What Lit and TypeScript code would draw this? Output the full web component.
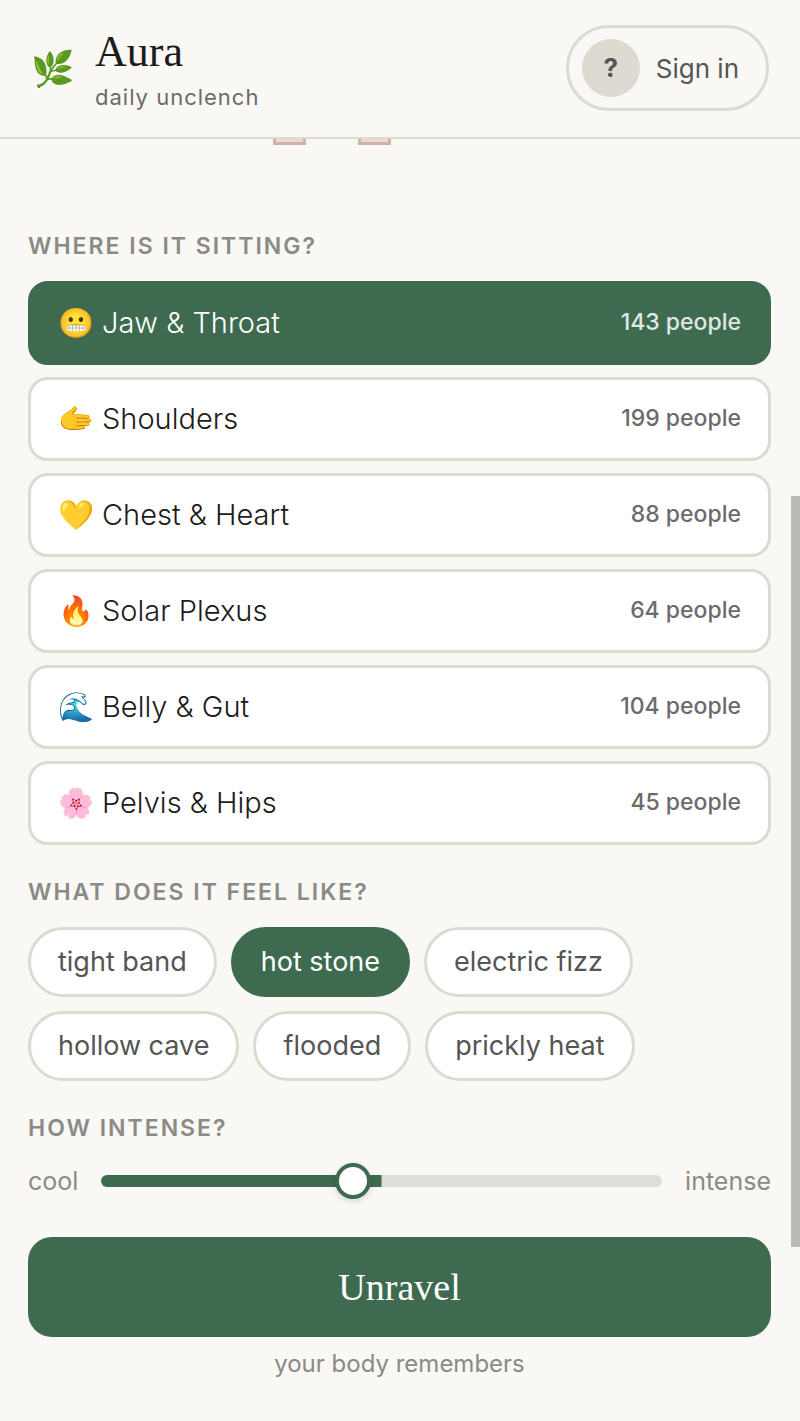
import { LitElement, html, css } from 'lit';
import { customElement, state } from 'lit/decorators.js';
import { classMap } from 'lit/directives/class-map.js';

const MIN_INTENSITY = 1;
const MAX_INTENSITY = 10;

const ZONES = [
  { emoji: '😬', name: 'Jaw & Throat', people: 143 },
  { emoji: '🫱', name: 'Shoulders', people: 199 },
  { emoji: '💛', name: 'Chest & Heart', people: 88 },
  { emoji: '🔥', name: 'Solar Plexus', people: 64 },
  { emoji: '🌊', name: 'Belly & Gut', people: 104 },
  { emoji: '🌸', name: 'Pelvis & Hips', people: 45 },
];

const SENSATIONS = [
  'tight band',
  'hot stone',
  'electric fizz',
  'hollow cave',
  'flooded',
  'prickly heat',
];

@customElement('app-root')
export class AppRoot extends LitElement {
  static styles = css`
    :host {
      --green: #3e6b50;
      --line: #dddad2;
      --paper: #f9f8f4;
      display: block;
      position: relative;
      background: var(--paper);
      color: #1c1c1c;
      font-family: Inter, 'Liberation Sans', sans-serif;
    }

    * {
      box-sizing: border-box;
    }

    button {
      font-family: inherit;
      cursor: pointer;
    }

    .header {
      display: flex;
      align-items: center;
      justify-content: space-between;
      padding: 25px 31px 26px;
      border-bottom: 2px solid var(--line);
    }

    .brand {
      display: flex;
      align-items: center;
      gap: 20px;
    }

    .brand__leaf {
      font-size: 35px;
      line-height: 44px;
    }

    .brand__name {
      margin: 0;
      font-family: 'Liberation Serif', serif;
      font-size: 44px;
      font-weight: 500;
      line-height: 52px;
    }

    .brand__tagline {
      margin: 6px 0 0;
      color: #6b6b6b;
      font-size: 22px;
      letter-spacing: 1px;
      line-height: 26px;
    }

    .signin {
      display: flex;
      align-items: center;
      gap: 16px;
      padding: 11px 27px 11px 13px;
      border: 3px solid var(--line);
      border-radius: 43px;
      background: none;
      color: #555;
      font-size: 26px;
    }

    .signin__avatar {
      width: 58px;
      border-radius: 50%;
      background: var(--line);
      font-size: 26px;
      font-weight: 700;
      line-height: 58px;
    }

    .content {
      padding: 0 29px 42px 28px;
    }

    .figure {
      display: block;
      width: 118px;
      height: 6px;
      margin-left: 33%;
    }

    .sections {
      display: flex;
      flex-direction: column;
      gap: 32px;
      margin-top: 86px;
    }

    .section__title {
      margin: 0 0 20px;
      color: #8a8a86;
      font-size: 23px;
      font-weight: 600;
      letter-spacing: 2px;
      line-height: 30px;
      text-transform: uppercase;
    }

    .zones {
      display: flex;
      flex-direction: column;
      gap: 12px;
    }

    .zone {
      display: flex;
      align-items: center;
      justify-content: space-between;
      height: 84px;
      padding: 0 27px 2px;
      border: 3px solid var(--line);
      border-radius: 20px;
      background: #fff;
      color: #1c1c1c;
      font-size: 29px;
      font-weight: 300;
    }

    .zone__label {
      display: flex;
      align-items: center;
      gap: 8px;
    }

    .zone__people {
      color: #6b6b6b;
      font-size: 23px;
      font-weight: 500;
    }

    .zone--selected {
      border-color: var(--green);
      background: var(--green);
      color: #fff;
    }

    .zone--selected .zone__people {
      color: #dfe8e2;
    }

    .chips {
      display: flex;
      flex-wrap: wrap;
      gap: 14px;
    }

    .chip {
      height: 70px;
      padding: 0 27px 2px;
      border: 3px solid var(--line);
      border-radius: 35px;
      background: #fff;
      color: #555;
      font-size: 27px;
    }

    .chip--selected {
      border-color: var(--green);
      background: var(--green);
      color: #fff;
    }

    .intensity {
      display: flex;
      align-items: center;
      gap: 23px;
      color: #8a8a86;
      font-size: 25px;
      line-height: 36px;
    }

    .intensity__range {
      flex: 1;
      min-width: 0;
      height: 12px;
      margin: 0;
      border-radius: 6px;
      background: linear-gradient(var(--green), var(--green)) no-repeat #dddddb;
      background-size: var(--fill) 100%;
      appearance: none;
    }

    .intensity__range::-webkit-slider-thumb {
      width: 36px;
      height: 36px;
      border: 4px solid var(--green);
      border-radius: 50%;
      background: #fff;
      box-shadow: 0 2px 6px rgba(0, 0, 0, 0.15);
      appearance: none;
    }

    .unravel {
      display: block;
      width: 100%;
      height: 100px;
      margin-top: 38px;
      border: 0;
      border-radius: 24px;
      background: var(--green);
      color: #fff;
      font-family: 'Liberation Serif', serif;
      font-size: 38px;
    }

    .footnote {
      margin: 12px 0 0;
      color: #8a8a86;
      font-size: 24px;
      line-height: 30px;
      text-align: center;
    }

    .scrollbar {
      position: absolute;
      top: 496px;
      right: 0;
      width: 9px;
      height: 751px;
      background: #bbbab8;
    }
  `;

  @state() zone = 'Jaw & Throat';
  @state() sensation = 'hot stone';
  @state() intensity = 5;

  updateIntensity(event: Event) {
    this.intensity = Number((event.target as HTMLInputElement).value);
  }

  renderZone(zone: (typeof ZONES)[number]) {
    return html`
      <button
        class=${classMap({ zone: true, 'zone--selected': zone.name === this.zone })}
        @click=${() => (this.zone = zone.name)}
      >
        <span class="zone__label"><span>${zone.emoji}</span><span>${zone.name}</span></span>
        <span class="zone__people">${zone.people} people</span>
      </button>
    `;
  }

  renderSensation(name: string) {
    return html`
      <button
        class=${classMap({ chip: true, 'chip--selected': name === this.sensation })}
        @click=${() => (this.sensation = name)}
      >${name}</button>
    `;
  }

  render() {
    return html`
      <header class="header">
        <div class="brand">
          <span class="brand__leaf">🌿</span>
          <div>
            <h1 class="brand__name">Aura</h1>
            <p class="brand__tagline">daily unclench</p>
          </div>
        </div>
        <button class="signin"><span class="signin__avatar">?</span>Sign in</button>
      </header>
      <main class="content">
        <svg class="figure" viewBox="0 0 118 6" fill="#eedbd0" stroke="#cdb3a8" stroke-width="3">
          <path d="M1.5 -4V4.5H31.5V-4M86.5 -4V4.5H116.5V-4" />
        </svg>
        <div class="sections">
          <section>
            <h2 class="section__title">Where is it sitting?</h2>
            <div class="zones">${ZONES.map((zone) => this.renderZone(zone))}</div>
          </section>
          <section>
            <h2 class="section__title">What does it feel like?</h2>
            <div class="chips">${SENSATIONS.map((name) => this.renderSensation(name))}</div>
          </section>
          <section>
            <h2 class="section__title" id="intensity-title">How intense?</h2>
            <div class="intensity">
              <span>cool</span>
              <input
                class="intensity__range"
                type="range"
                aria-labelledby="intensity-title"
                min=${MIN_INTENSITY}
                max=${MAX_INTENSITY}
                .value=${String(this.intensity)}
                style="--fill: ${this.intensity * 10}%"
                @input=${this.updateIntensity}
              >
              <span>intense</span>
            </div>
          </section>
        </div>
        <button class="unravel">Unravel</button>
        <p class="footnote">your body remembers</p>
      </main>
      <div class="scrollbar"></div>
    `;
  }
}
